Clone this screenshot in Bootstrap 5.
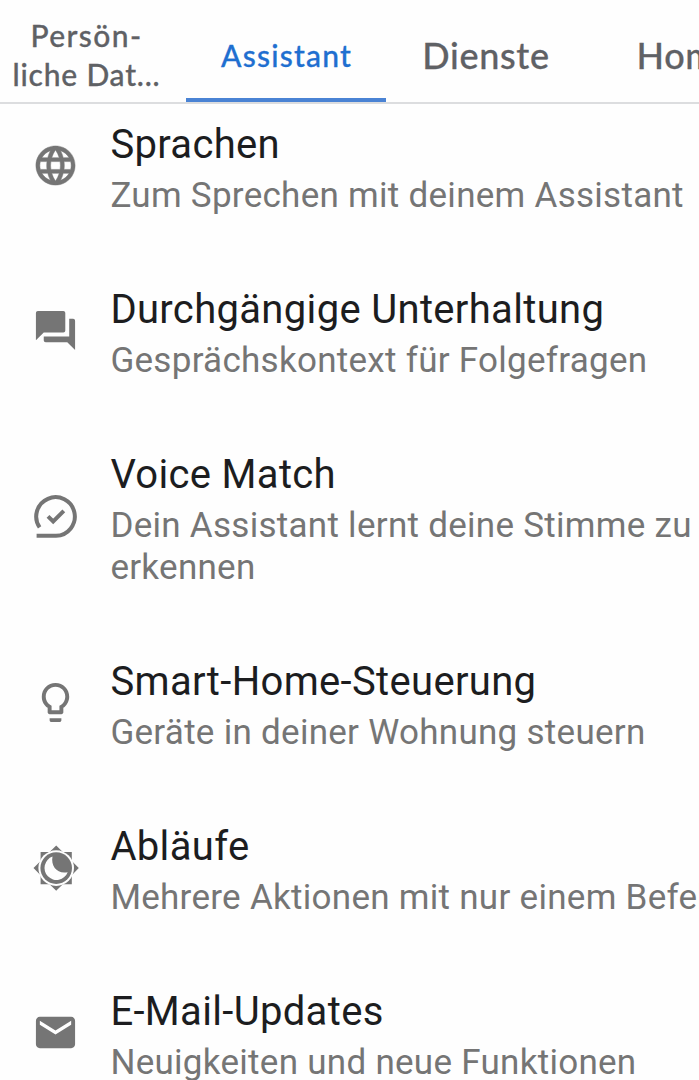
<!DOCTYPE html>
<html lang="de">
<head>
<meta charset="utf-8">
<meta name="viewport" content="width=device-width, initial-scale=1">
<title>Assistant</title>
<link href="https://cdn.jsdelivr.net/npm/bootstrap@5.3.0/dist/css/bootstrap.min.css" rel="stylesheet">
<style>
body{font-family:Roboto,sans-serif;background:#fefefe;height:1080px;overflow:hidden}
.tabs{height:104px;border-bottom:2px solid #dcdddf;font-family:Lato,"Open Sans",sans-serif;font-weight:500;color:#5f6165;background:#fefefe;overflow:hidden}
.tabs .nav-link{color:inherit;padding:8px 0 0;width:200px;height:102px;font-size:36px;line-height:39px;letter-spacing:.7px;flex:none;white-space:nowrap;-webkit-text-stroke:.3px currentColor}
.tabs .t1{width:186px;font-size:30px;padding:8px 13px 0 0;letter-spacing:.8px}
.tabs .t1 .w{letter-spacing:1.4px}
.tabs .nav-link.active{font-size:30px;letter-spacing:1.2px;color:#1f6fd0;border-bottom:4px solid #4a83d4;padding:12px 0 0 1px}
.settings{height:976px;overflow:hidden}
.settings-list{margin-top:-21px}
.entry{height:165px}
.entry.tall{height:207px}
.ico{width:110.4px;flex:none;padding-left:32px}
.ico svg{display:block;width:47px;height:47px;fill:#757575}
.txt{padding-top:38px}
.ttl{font-size:40px;line-height:47px;letter-spacing:.33px;color:#1c1d1f;margin:0 0 7px;font-weight:400;white-space:nowrap}
.desc{font-size:35px;line-height:42px;letter-spacing:.28px;color:#757575;margin:0;white-space:nowrap}
</style>
</head>
<body>
<nav class="tabs nav flex-nowrap">
<a class="nav-link t1 d-flex align-items-center justify-content-center text-center" href="#"><span><span class="w">Persön-</span><br>liche Dat...</span></a>
<a class="nav-link active d-flex align-items-center justify-content-center" href="#">Assistant</a>
<a class="nav-link d-flex align-items-center justify-content-center" href="#">Dienste</a>
<a class="nav-link d-flex align-items-center justify-content-center" href="#">Home</a>
</nav>
<main class="settings">
<div class="settings-list">
<section class="entry d-flex">
<div class="ico d-flex align-items-center"><svg viewBox="0 0 24 24"><path stroke="#757575" stroke-width=".25" d="M11.99 2C6.47 2 2 6.48 2 12s4.47 10 9.99 10C17.52 22 22 17.52 22 12S17.52 2 11.99 2zm6.93 6h-2.95c-.32-1.25-.78-2.45-1.38-3.56 1.84.63 3.37 1.91 4.33 3.56zM12 4.04c.83 1.2 1.48 2.53 1.91 3.96h-3.82c.43-1.43 1.08-2.76 1.91-3.96zM4.26 14C4.1 13.36 4 12.69 4 12s.1-1.36.26-2h3.38c-.08.66-.14 1.32-.14 2s.06 1.34.14 2H4.26zm.82 2h2.95c.32 1.25.78 2.45 1.38 3.56-1.84-.63-3.37-1.9-4.33-3.56zm2.95-8H5.08c.96-1.66 2.49-2.93 4.33-3.56C8.81 5.55 8.35 6.75 8.03 8zM12 19.96c-.83-1.2-1.48-2.53-1.91-3.96h3.82c-.43 1.43-1.08 2.76-1.91 3.96zM14.34 14H9.66c-.09-.66-.16-1.32-.16-2s.07-1.35.16-2h4.68c.09.65.16 1.32.16 2s-.07 1.34-.16 2zm.25 5.56c.6-1.11 1.06-2.31 1.38-3.56h2.95c-.96 1.65-2.49 2.93-4.33 3.56zM16.36 14c.08-.66.14-1.32.14-2s-.06-1.34-.14-2h3.38c.16.64.26 1.31.26 2s-.1 1.36-.26 2h-3.38z"/></svg></div>
<div class="txt"><h2 class="ttl">Sprachen</h2><p class="desc">Zum Sprechen mit deinem Assistant</p></div>
</section>
<section class="entry d-flex">
<div class="ico d-flex align-items-center"><svg viewBox="0 0 24 24"><path d="M21 6h-2v9H6v2c0 .55.45 1 1 1h11l4 4V7c0-.55-.45-1-1-1zm-4 6V3c0-.55-.45-1-1-1H3c-.55 0-1 .45-1 1v14l4-4h10c.55 0 1-.45 1-1z"/></svg></div>
<div class="txt"><h2 class="ttl">Durchgängige Unterhaltung</h2><p class="desc">Gesprächskontext für Folgefragen</p></div>
</section>
<section class="entry tall d-flex">
<div class="ico d-flex align-items-center"><svg viewBox="0 0 47 47"><g fill="none" stroke="#757575" stroke-width="4"><path d="M7.6 34.4A19.3 19.3 0 1 1 24 42.8H4.6"/><path d="M16 23.3l5.2 5.2 10.6-10.6"/></g></svg></div>
<div class="txt"><h2 class="ttl">Voice Match</h2><p class="desc">Dein Assistant lernt deine Stimme zu<br>erkennen</p></div>
</section>
<section class="entry d-flex">
<div class="ico d-flex align-items-center"><svg viewBox="0 0 24 24"><path d="M9 21c0 .5.4 1 1 1h4c.6 0 1-.5 1-1v-1H9v1zm3-19C8.1 2 5 5.1 5 9c0 2.4 1.2 4.5 3 5.7V17c0 .5.4 1 1 1h6c.6 0 1-.5 1-1v-2.3c1.8-1.3 3-3.4 3-5.7 0-3.9-3.1-7-7-7zm2.9 11.1l-.9.6V16h-4v-2.3l-.8-.6C7.8 12.2 7 10.6 7 9c0-2.8 2.2-5 5-5s5 2.2 5 5c0 1.6-.8 3.2-2.1 4.1z"/></svg></div>
<div class="txt"><h2 class="ttl">Smart-Home-Steuerung</h2><p class="desc">Geräte in deiner Wohnung steuern</p></div>
</section>
<section class="entry d-flex">
<div class="ico d-flex align-items-center"><svg viewBox="0 0 47 47"><path d="M24.2 1.4l6.6 6.6h9v9l7 7.1-7 7.1v9h-9l-6.6 6.6-6.6-6.6h-9v-9l-7.1-7.1L8.6 17V8h9z"/><circle cx="24.2" cy="24.1" r="17.8" fill="#fefefe"/><circle cx="24.2" cy="24.1" r="15.8"/><path d="M20.5 12.6a12 12 0 1 0 15.2 15.6C26 30.5 18.5 23 20.5 12.6z" fill="#fefefe"/></svg></div>
<div class="txt"><h2 class="ttl">Abläufe</h2><p class="desc">Mehrere Aktionen mit nur einem Befehl</p></div>
</section>
<section class="entry d-flex">
<div class="ico d-flex align-items-center"><svg viewBox="0 0 24 24"><path d="M20 4H4c-1.1 0-1.99.9-1.99 2L2 18c0 1.1.9 2 2 2h16c1.1 0 2-.9 2-2V6c0-1.1-.9-2-2-2zm0 4l-8 5-8-5V6l8 5 8-5v2z"/></svg></div>
<div class="txt"><h2 class="ttl">E-Mail-Updates</h2><p class="desc">Neuigkeiten und neue Funktionen</p></div>
</section>
</div>
</main>
<script src="https://cdn.jsdelivr.net/npm/bootstrap@5.3.0/dist/js/bootstrap.bundle.min.js"></script>
</body>
</html>
